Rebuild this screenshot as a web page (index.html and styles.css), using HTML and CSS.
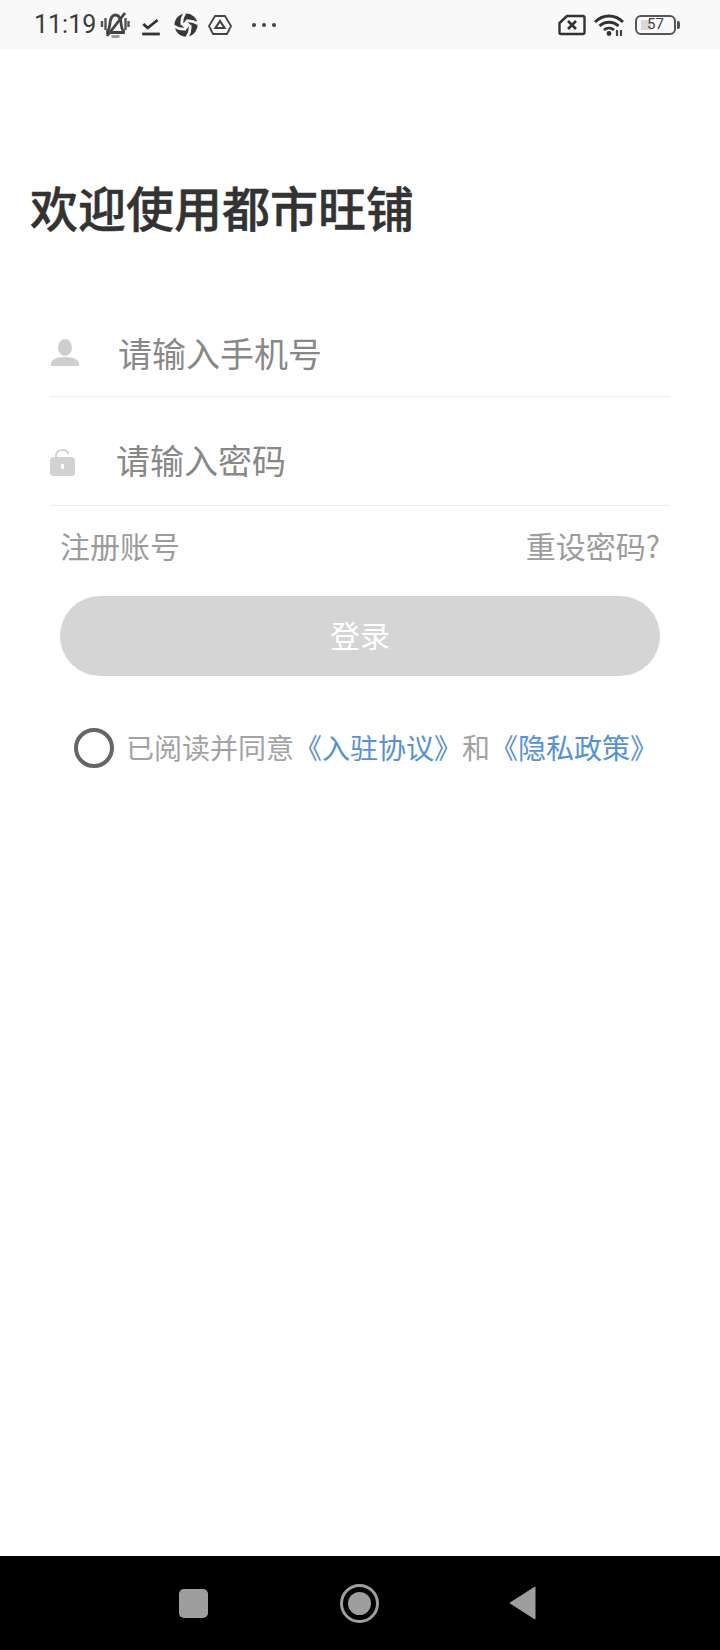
FILE: index.html
```html
<!DOCTYPE html>
<html lang="zh">
<head>
<meta charset="utf-8">
<title>都市旺铺</title>
<link rel="stylesheet" href="styles.css">
</head>
<body>
<div class="screen">
  <header class="status">
    <div class="status-left">
      <span class="time">11:19</span>
      <svg class="ic-bell" width="30" height="28" viewBox="0 0 30 28"><path d="M7.500 20c2.500-2 2-7 3-11C11.500 5.500 13.500 4 15.500 4s4 1.500 5 5c1 4 .5 9 3 11v1.500h-16z" fill="none" stroke="#444" stroke-width="2.800"/><path d="M11.500 25.500h8" stroke="#999" stroke-width="2.800"/><path d="M7 25 25 2" stroke="#444" stroke-width="2.800"/><path d="M2 10v6M5.500 7v12M25.500 7v12M28.500 10v6" stroke="#555" stroke-width="2.400"/></svg>
      <svg class="ic-check" width="18" height="22" viewBox="0 0 18 22"><path d="M2 10l4 4 9-8" fill="none" stroke="#333" stroke-width="2.600"/><path d="M1 20h16" stroke="#333" stroke-width="2.800"/></svg>
      <svg class="ic-aperture" width="24" height="24" viewBox="0 0 24 24"><circle cx="12" cy="12" r="11.500" fill="#383838"/><path d="M12 7.500l4.500 4.500-4.500 4.500-4.500-4.500z" fill="#f9f9f9"/><path d="M8 12C7.500 8 8 4 11 0M12 8C16 7.500 20 8 24 11M16 12C16.500 16 16 20 13 24M12 16C8 16.500 4 16 0 13" fill="none" stroke="#f9f9f9" stroke-width="2.800"/></svg>
      <svg class="ic-drive" width="24" height="22" viewBox="0 0 24 22"><path d="M7 2h10l6 10-4 8H5l-4-8z" fill="none" stroke="#444" stroke-width="1.800" stroke-linejoin="round"/><path d="M12 7l4.500 7h-9z" fill="none" stroke="#444" stroke-width="2.200"/></svg>
      <svg class="ic-dots" width="26" height="6" viewBox="0 0 26 6"><circle cx="3" cy="3" r="2" fill="#444"/><circle cx="13" cy="3" r="2" fill="#444"/><circle cx="23" cy="3" r="2" fill="#444"/></svg>
    </div>
    <div class="status-right">
      <svg class="ic-sim" width="28" height="22" viewBox="0 0 28 22"><path d="M9 2h16a1.500 1.500 0 0 1 1.500 1.500v15a1.500 1.500 0 0 1-1.500 1.500H3a1.500 1.500 0 0 1-1.500-1.500V9z" fill="none" stroke="#333" stroke-width="2.400" stroke-linejoin="round"/><path d="M10 7l8 8M18 7l-8 8" stroke="#333" stroke-width="2.600"/></svg>
      <svg class="ic-wifi" width="32" height="24" viewBox="0 0 32 24"><path d="M2 9c8-8 20-8 28 0M6.500 13c5.500-5 13.500-5 19 0M11 17c3-2.500 7-2.500 10 0" fill="none" stroke="#333" stroke-width="2.800"/><circle cx="16" cy="20.500" r="2.400" fill="#333"/><path d="M24 17v6M28 17v6" stroke="#444" stroke-width="2.200"/></svg>
      <div class="battery">
        <div class="battery-body"><span class="battery-level"></span><span class="battery-num">57</span></div>
        <span class="battery-tip"></span>
      </div>
    </div>
  </header>

  <main class="content">
    <h1 class="title">欢迎使用都市旺铺</h1>
    <div class="field field-phone">
      <svg class="field-icon" width="28" height="28" viewBox="0 0 28 28"><ellipse cx="14" cy="8.500" rx="7" ry="8.500" fill="#cfcfcf"/><path d="M0 27v-3c0-3 5-6 14-6s14 3 14 6v3z" fill="#cfcfcf"/></svg>
      <span class="placeholder">请输入手机号</span>
    </div>
    <div class="field field-pass">
      <svg class="field-icon" width="26" height="28" viewBox="0 0 26 28"><path d="M6 11V7.500C6 4 9 2 12.500 2c3 0 5 1.500 6 4" fill="none" stroke="#d2d2d2" stroke-width="2"/><rect y="9" width="25" height="19" rx="3.500" fill="#d2d2d2"/><rect x="11" y="16" width="3" height="5" fill="#fff"/></svg>
      <span class="placeholder">请输入密码</span>
    </div>
    <div class="links">
      <span>注册账号</span>
      <span>重设密码?</span>
    </div>
    <div class="login">登录</div>
    <div class="agree">
      <span class="radio"></span>
      <span class="agree-text">已阅读并同意<a class="link">《入驻协议》</a>和<a class="link">《隐私政策》</a></span>
    </div>
  </main>

  <footer class="nav">
    <span class="nav-square"></span>
    <span class="nav-circle"><span class="nav-dot"></span></span>
    <svg class="nav-back" width="27" height="34" viewBox="0 0 27 34"><path d="M26 1 1 17l25 16z" fill="#9e9e9e" stroke="#9e9e9e" stroke-linejoin="round"/></svg>
  </footer>
</div>
</body>
</html>
```
FILE: styles.css
```css
* { box-sizing: border-box; }
html, body { margin: 0; padding: 0; }
body {
  width: 720px;
  height: 1650px;
  overflow: hidden;
  background: #fff;
  font-family: "Noto Sans CJK SC", "Noto Sans", sans-serif;
}
.screen { display: flex; flex-direction: column; height: 1650px; }
.status {
  height: 49px;
  flex: none;
  background: #f9f9f9;
  display: flex;
  align-items: center;
  justify-content: space-between;
  padding: 0 0 0 34px;
}
.status-left, .status-right { display: flex; align-items: center; }
.time { font-family: Roboto, sans-serif; font-size: 25px; color: #3c3c3c; }
.ic-bell { margin-left: 4px; }
.ic-check { margin-left: 12px; transform: scaleX(1.1); }
.ic-aperture { margin-left: 14px; }
.ic-drive { margin-left: 10px; }
.ic-dots { margin-left: 19px; }
.status-right { padding-right: 40px; }
.ic-wifi { margin-left: 7px; }
.battery { display: flex; align-items: center; margin-left: 10px; }
.battery-body {
  position: relative;
  width: 41px;
  height: 20px;
  border: 2px solid #555;
  border-radius: 6px;
  display: flex;
  align-items: center;
  justify-content: center;
}
.battery-level { position: absolute; left: 4px; top: 3px; bottom: 3px; width: 10px; background: #d8d8d8; }
.battery-num { position: relative; font-family: Roboto, sans-serif; font-size: 15px; color: #444; line-height: 1; }
.battery-tip { width: 3px; height: 8px; margin-left: 1px; background: #555; border-radius: 0 2px 2px 0; }

.content { flex: 1; padding: 0 50px; min-height: 0; }
.title {
  margin: 122px 0 0 -20px;
  font-size: 48px;
  line-height: 70px;
  font-weight: 500;
  -webkit-text-stroke: 0.5px #333;
  color: #333;
}
.field {
  display: flex;
  align-items: center;
  border-bottom: 1px solid #ececec;
  width: 620px;
}
.field-phone { height: 105px; margin-top: 51px; padding-top: 17px; }
.field-phone .field-icon { margin: 0 0 0 1px; }
.field-pass { height: 109px; padding-top: 18px; }
.field-pass .field-icon { margin: 3px 0 0; }
.placeholder { font-size: 34px; color: #888; line-height: 50px; }
.field-phone .placeholder { margin-left: 39px; }
.field-pass .placeholder { margin-left: 40px; }
.links {
  display: flex;
  justify-content: space-between;
  margin: 16px 10px 0;
  font-size: 30px;
  line-height: 46px;
  color: #9c9c9c;
}
.login {
  margin: 28px 10px 0;
  height: 80px;
  padding-bottom: 4px;
  border-radius: 40px;
  background: #d5d5d5;
  color: #fff;
  font-size: 30px;
  display: flex;
  align-items: center;
  justify-content: center;
}
.agree {
  display: flex;
  align-items: center;
  margin: 51px 0 0 24px;
}
.radio {
  width: 40px;
  height: 40px;
  border: 4px solid #666;
  border-radius: 50%;
  flex: none;
}
.agree-text { margin-left: 12px; padding-bottom: 2px; font-size: 28px; line-height: 40px; color: #a3a3a3; white-space: nowrap; }
.link { color: #5590e0; }

.nav {
  height: 94px;
  flex: none;
  background: #000;
  display: flex;
  align-items: center;
  justify-content: center;
  gap: 130px;
  padding-right: 5px;
}
.nav-square { width: 29px; height: 29px; margin-right: 2px; border-radius: 5px; background: #9e9e9e; }
.nav-circle {
  width: 39px;
  height: 39px;
  border: 3px solid #9e9e9e;
  border-radius: 50%;
  display: flex;
  align-items: center;
  justify-content: center;
}
.nav-dot { width: 23px; height: 23px; border-radius: 50%; background: #9e9e9e; }
```
